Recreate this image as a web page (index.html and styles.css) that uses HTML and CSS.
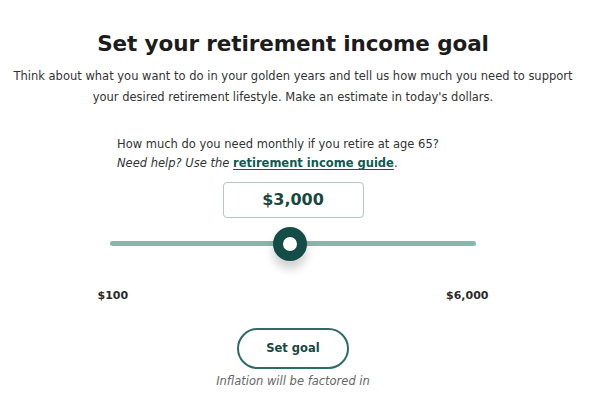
FILE: index.html
```html
<!DOCTYPE html>
<html lang="en">
<head>
<meta charset="utf-8">
<title>Set your retirement income goal</title>
<link rel="stylesheet" href="styles.css">
</head>
<body>
<main class="goal">
  <h1 class="goal__title">Set your retirement income goal</h1>
  <p class="goal__intro">Think about what you want to do in your golden years and tell us how much you need to support your desired retirement lifestyle. Make an estimate in today's dollars.</p>
  <div class="goal__question">
    <p class="goal__ask">How much do you need monthly if you retire at age 65?</p>
    <p class="goal__help"><em>Need help? Use the</em> <a class="goal__link" href="#">retirement income guide</a>.</p>
  </div>
  <div class="goal__amount">$3,000</div>
  <div class="slider">
    <div class="slider__rail">
      <div class="slider__track">
        <span class="slider__thumb" style="left: 49.2%"></span>
      </div>
    </div>
    <div class="slider__labels">
      <span>$100</span>
      <span>$6,000</span>
    </div>
  </div>
  <button class="goal__button" type="button">Set goal</button>
  <p class="goal__note">Inflation will be factored in</p>
</main>
</body>
</html>
```

FILE: styles.css
```css
* { box-sizing: border-box; }

html, body {
  margin: 0;
  padding: 0;
  background: #ffffff;
}

body {
  font-family: "DejaVu Sans", "Noto Sans", sans-serif;
  color: #2b2b2b;
}

.goal {
  width: 592px;
  display: flex;
  flex-direction: column;
  align-items: center;
  padding: 30px 6px 0 0;
}

.goal__title {
  margin: 0;
  font-size: 21.5px;
  line-height: 28px;
  font-weight: 700;
  color: #1c1c1c;
  letter-spacing: -0.1px;
}

.goal__intro {
  margin: 8px 0 0;
  width: 570px;
  text-align: center;
  font-size: 11.5px;
  line-height: 21px;
  color: #333;
}

.goal__question {
  margin-top: 27px;
  width: 352px;
  font-size: 11.5px;
  line-height: 19px;
  color: #333;
}

.goal__ask, .goal__help { margin: 0; }

.goal__help em { font-style: italic; }

.goal__link {
  color: #0f5a50;
  font-weight: 700;
  text-decoration: underline;
  text-underline-offset: 2px;
}

.goal__help {
  color: #333;
}

.goal__amount {
  margin-top: 8.5px;
  width: 141px;
  height: 36px;
  border: 1px solid #b3c8c3;
  border-radius: 4px;
  display: flex;
  align-items: center;
  justify-content: center;
  font-size: 16px;
  font-weight: 700;
  color: #17473f;
}

.slider {
  margin-top: 9px;
  width: 391px;
  display: flex;
  flex-direction: column;
  align-items: center;
}

.slider__rail {
  width: 366px;
  height: 34px;
  display: flex;
  align-items: center;
}

.slider__track {
  position: relative;
  width: 100%;
  height: 5px;
  border-radius: 3px;
  background: #85b8a8;
}

.slider__thumb {
  position: absolute;
  top: 50%;
  width: 34px;
  height: 34px;
  margin-left: -17px;
  margin-top: -17px;
  border-radius: 50%;
  background: #fff;
  border: 10.5px solid #144d47;
  box-shadow: 0 8px 10px rgba(0, 0, 0, 0.18);
}

.slider__labels {
  margin-top: 28px;
  width: 100%;
  display: flex;
  justify-content: space-between;
  font-size: 11px;
  line-height: 14px;
  font-weight: 700;
  color: #2b2b2b;
}

.goal__button {
  margin-top: 25px;
  width: 112px;
  height: 41px;
  border: 2px solid #2d6b64;
  border-radius: 21px;
  background: #fff;
  font-family: inherit;
  font-size: 11.5px;
  font-weight: 700;
  color: #17473f;
  padding: 0;
}

.goal__note {
  margin: 5.5px 0 0;
  font-size: 11.5px;
  line-height: 15px;
  font-style: italic;
  color: #666;
}
```
